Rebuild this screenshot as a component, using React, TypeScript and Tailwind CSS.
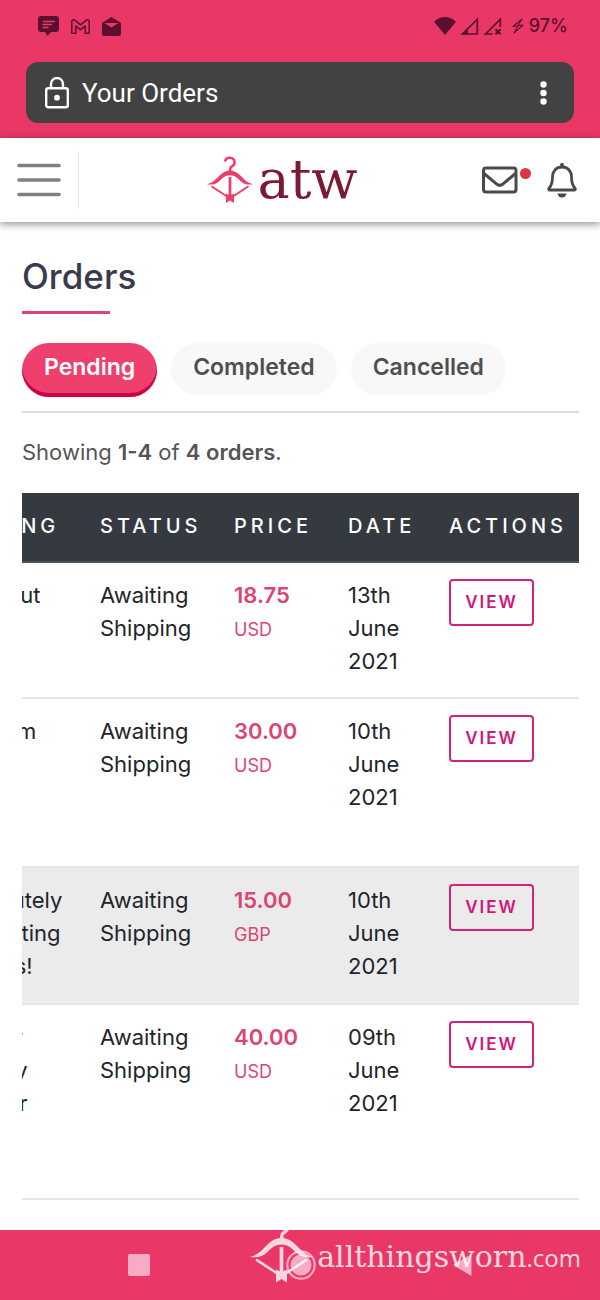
import { useLayoutEffect, useRef, useState } from 'react';

const TABS = ['Pending', 'Completed', 'Cancelled'];

const COLUMNS = [
  { label: 'Listing', width: 'w-[147px]' },
  { label: 'Status', width: 'w-[134px]' },
  { label: 'Price', width: 'w-[114px]' },
  { label: 'Date', width: 'w-[101px]' },
  { label: 'Actions', width: 'w-[148px]' },
];

const ORDERS = [
  { id: 1, listing: 'Workout', status: 'Awaiting Shipping', price: '18.75', currency: 'USD', date: '13th June 2021', row: 'h-[136px]' },
  { id: 2, listing: 'Uniform', status: 'Awaiting Shipping', price: '30.00', currency: 'USD', date: '10th June 2021', row: 'h-[169px]' },
  { id: 3, listing: 'Absolutely disgusting jackets!', status: 'Awaiting Shipping', price: '15.00', currency: 'GBP', date: '10th June 2021', row: 'h-[137px] bg-[#ebebeb]' },
  { id: 4, listing: 'Flower sweaty fresher', status: 'Awaiting Shipping', price: '40.00', currency: 'USD', date: '09th June 2021', row: 'h-[195px]' },
];

function BowLogo({ className }: { className: string }) {
  return (
    <svg viewBox="0 0 46 48" className={className} fill="none" stroke="currentColor" aria-hidden="true">
      <path d="M18 5.500C18.400 3 20.400 1.700 23 1.800c2.700.1 4.600 2 4.600 4.500 0 2.100-1.400 3.500-3 4.300-1 .6-1.400 1.200-1.400 2.400V17" strokeWidth="2.500" />
      <path
        d="M0 28.200C5 27.200 8 24.500 11.300 20.800 14.800 16.800 18.500 14.500 23 14.500S31.200 16.800 34.700 20.800C38 24.500 41 27.200 46 28.200 41.500 29.300 37.300 28.200 34 25.400 30.500 22.300 28 19.300 23 19.300S15.500 22.300 12 25.400C8.700 28.200 4.500 29.300 0 28.200z"
        fill="currentColor"
        stroke="none"
      />
      <path d="M4.500 30.300 20.500 40.800M41.500 30.300 25.500 40.800" strokeWidth="1.900" />
      <path d="M23 21V40" strokeWidth="2.700" />
      <path d="M19 37.500 23 39.500l4-2V47L23 44.400 19 47z" fill="currentColor" stroke="none" />
    </svg>
  );
}

function StatusBar() {
  return (
    <div className="flex h-[52px] items-center justify-between pr-8 pl-[38px] text-[#5c1030]">
      <div className="flex items-center gap-3">
        <svg width="21" height="20" viewBox="0 0 21 20" aria-hidden="true">
          <path d="M3 0h15a3 3 0 0 1 3 3v10a3 3 0 0 1-3 3h-5l-3.500 4L7 16H3a3 3 0 0 1-3-3V3a3 3 0 0 1 3-3z" fill="currentColor" />
          <path d="M5 5.500h12M4.500 8.500h9.500M4.500 11.500h6" stroke="#e93766" strokeWidth="1.500" />
        </svg>
        <svg width="19" height="15" viewBox="0 0 19 15" fill="none" stroke="currentColor" strokeWidth="1.500" strokeLinejoin="round" aria-hidden="true">
          <path d="M.8 2.500C.8.800 2.700.300 4 1.400L9.500 5.800 15 1.400c1.300-1.100 3.200-.600 3.200 1.100V14.200h-4V7L9.500 10.700 4.800 7v7.200h-4z" />
        </svg>
        <svg width="19" height="19" viewBox="0 0 19 19" aria-hidden="true">
          <path d="M9.500 0 18.300 5.500c.5.300.7.700.7 1.200V17a2 2 0 0 1-2 2H2a2 2 0 0 1-2-2V6.700c0-.5.200-.9.700-1.200z" fill="currentColor" />
          <path d="M2.500 6H16.500L9.500 10.500z" fill="#e93766" />
        </svg>
      </div>
      <div className="flex items-center">
        <svg width="22" height="18" viewBox="0 0 22 18" fill="currentColor" aria-hidden="true">
          <path d="M0 4.800C6-1.600 16-1.600 22 4.800L11 18z" />
        </svg>
        <svg width="19" height="18" viewBox="0 0 19 18" className="ml-1" aria-hidden="true">
          <path d="M17.300 2.200V17H2.600z" fill="none" stroke="currentColor" strokeWidth="1.700" />
          <path d="M1 17.800 8 10.500v7.300z" fill="currentColor" />
        </svg>
        <svg width="19" height="18" viewBox="0 0 19 18" className="ml-1" fill="none" stroke="currentColor" strokeWidth="1.700" aria-hidden="true">
          <path d="M17.300 10V2.200L2.600 17H9.500" />
          <path d="M12.500 12.200l5 5M17.500 12.200l-5 5" strokeWidth="2.200" />
        </svg>
        <svg width="12" height="16" viewBox="0 0 12 16" className="ml-[10px]" fill="none" stroke="currentColor" strokeWidth="1.100" strokeLinejoin="round" aria-hidden="true">
          <path d="M10 1 1 8.500l5-.7L2 15l9-8-5 .7z" />
        </svg>
        <span className="ml-[5px] text-lg font-medium">97%</span>
      </div>
    </div>
  );
}

function AddressBar() {
  return (
    <div className="mx-[26px] mt-[10px] mb-[15px] flex h-[61px] items-center rounded-xl bg-[#424242] pr-[25px] pl-[19px] text-white">
      <svg width="24" height="32" viewBox="0 0 24 32" fill="none" stroke="currentColor" strokeWidth="2.400" aria-hidden="true">
        <path d="M6 11V7a6 6 0 0 1 12 0v4" />
        <rect x="1.200" y="11.200" width="21.600" height="19" rx="2" />
        <circle cx="12" cy="20.700" r="2.900" fill="currentColor" stroke="none" />
      </svg>
      <span className="ml-[13px] flex-1 font-[Roboto,sans-serif] text-[26px] leading-8">Your Orders</span>
      <button type="button" aria-label="More options" className="flex w-3 justify-center">
        <svg width="7" height="24" viewBox="0 0 7 24" fill="currentColor">
          <circle cx="3.500" cy="3.500" r="3.200" />
          <circle cx="3.500" cy="12" r="3.200" />
          <circle cx="3.500" cy="20.500" r="3.200" />
        </svg>
      </button>
    </div>
  );
}

function SiteHeader() {
  return (
    <header className="relative flex h-[84px] items-center justify-between bg-white pr-[22px] pl-4 shadow-[0_2px_8px_rgba(0,0,0,0.45)]">
      <div className="mr-1 flex items-center">
        <button type="button" aria-label="Menu" className="text-[#808080]">
          <svg width="46" height="34" viewBox="0 0 46 34" stroke="currentColor" strokeWidth="3.600" strokeLinecap="round">
            <path d="M3 2.500h40M3 17h40M3 31.500h40" />
          </svg>
        </button>
        <span className="ml-4 h-[58px] w-px bg-[#e2e2e2]" />
      </div>
      <a href="#home" className="flex items-center gap-1 text-[#ee3d6b]">
        <BowLogo className="h-12 w-[46px]" />
        <span className="font-['DejaVu_Serif',serif] text-[54px] leading-[60px] text-[#7c1a33]">atw</span>
      </a>
      <div className="flex items-center text-[#4a4a4a]">
        <button type="button" aria-label="Messages" className="relative">
          <svg width="36" height="28" viewBox="0 0 36 28" fill="none" stroke="currentColor" strokeWidth="3">
            <rect x="1.500" y="2" width="32.500" height="24" rx="2.500" />
            <path d="M2 7.500 15 18.300c1.800 1.400 3.700 1.400 5.500 0L33.500 7.500" />
          </svg>
          <span className="absolute top-[2px] -right-[13px] size-[11px] rounded-full bg-[#dc3545]" />
        </button>
        <button type="button" aria-label="Notifications" className="ml-7">
          <svg width="32" height="36" viewBox="0 0 32 36" fill="none" stroke="currentColor" strokeWidth="2.800">
            <path d="M16 5C9.800 5 6.500 9.600 6.500 15c0 6.300-1.300 9-3.500 11.300-.7.800-.5 1.700.5 1.700h25c1 0 1.200-.900.500-1.700C26.800 24 25.500 21.300 25.500 15 25.500 9.600 22.200 5 16 5z" />
            <path d="M16 2.500v2" strokeWidth="3.600" strokeLinecap="round" />
            <path d="M11.500 31.500h9a4.500 4 0 0 1-9 0z" fill="currentColor" stroke="none" />
          </svg>
        </button>
      </div>
    </header>
  );
}

function OrdersTable() {
  const scroller = useRef<HTMLDivElement>(null);

  // Open on the price and action columns on narrow screens
  useLayoutEffect(() => {
    if (scroller.current) scroller.current.scrollLeft = scroller.current.scrollWidth;
  }, []);

  return (
    <div ref={scroller} className="mt-6 overflow-x-auto [scrollbar-width:none]">
      <table className="w-full min-w-[644px] table-fixed border-collapse text-left">
        <thead>
          <tr className="border-b-2 border-[#4b545c] bg-[#343a40] text-white">
            {COLUMNS.map((col) => (
              <th
                key={col.label}
                scope="col"
                className={`${col.width} pt-[17px] pr-0 pb-[18px] pl-[18px] text-xl leading-[33px] font-medium tracking-[4px] uppercase`}
              >
                {col.label}
              </th>
            ))}
          </tr>
        </thead>
        <tbody>
          {ORDERS.map((order) => (
            <tr key={order.id} className={`${order.row} border-b-2 border-[#e3e5e7] align-top text-[22px] leading-[33px] text-[#212529]`}>
              <td className="px-[18px] pt-4 pb-[18px]">{order.listing}</td>
              <td className="px-[18px] pt-4 pb-[18px]">{order.status}</td>
              <td className="px-[18px] pt-4 pb-[18px] text-[#dc4570]">
                <div className="font-semibold">{order.price}</div>
                <div className="text-lg leading-9">{order.currency}</div>
              </td>
              <td className="px-[18px] pt-4 pb-[18px]">{order.date}</td>
              <td className="px-[18px] pt-4 pb-[18px]">
                <button
                  type="button"
                  className="h-[47px] w-[85px] rounded border-2 border-[#d0237c] pb-[2px] text-[17px] leading-6 font-semibold tracking-[2px] text-[#d0187a]"
                >
                  VIEW
                </button>
              </td>
            </tr>
          ))}
        </tbody>
      </table>
    </div>
  );
}

function NavBar() {
  return (
    <footer className="relative flex h-[70px] items-center justify-around bg-[#e93766] px-[60px] text-[#f8abc4]">
      <button type="button" aria-label="Recent apps">
        <svg width="22" height="22" viewBox="0 0 22 22" fill="currentColor">
          <rect width="22" height="22" rx="2" />
        </svg>
      </button>
      <button type="button" aria-label="Home">
        <svg width="30" height="30" viewBox="0 0 30 30">
          <circle cx="15" cy="15" r="13.700" fill="none" stroke="currentColor" strokeWidth="2.200" />
          <circle cx="15" cy="15" r="10.500" fill="currentColor" />
        </svg>
      </button>
      <button type="button" aria-label="Back">
        <svg width="20" height="24" viewBox="0 0 20 24" fill="currentColor">
          <path d="M1 12 19.500 1v22z" />
        </svg>
      </button>
      <div className="absolute right-[19px] bottom-4 flex items-end text-white opacity-80">
        <BowLogo className="h-[66px] w-[63px]" />
        <div className="mb-2 ml-1 flex items-baseline">
          <span className="font-['DejaVu_Serif',serif] text-[30px] leading-9">allthingsworn</span>
          <span className="font-['Open_Sans',sans-serif] text-2xl leading-9">.com</span>
        </div>
      </div>
    </footer>
  );
}

export default function App() {
  const [active, setActive] = useState('Pending');

  return (
    <div className="flex min-h-screen flex-col bg-white font-[Inter,sans-serif]">
      <div className="bg-[#e93766]">
        <StatusBar />
        <AddressBar />
      </div>
      <SiteHeader />
      <main className="flex-1 pt-8 pr-[21px] pl-[22px]">
        <h1 className="text-[35px] leading-[45px] font-medium text-[#3a3a4f]">Orders</h1>
        <div className="mt-3 h-[3px] w-[88px] bg-[#e0446f]" />
        <div className="mt-[29px] flex items-start gap-[14px] border-b-2 border-[#dcdcdc] pb-[14px]">
          {TABS.map((tab) => (
            <button
              key={tab}
              type="button"
              onClick={() => setActive(tab)}
              className={`rounded-full px-[22px] pt-2 text-[23px] leading-[33px] font-semibold ${
                tab === active
                  ? 'bg-[#ef3f6c] pb-[13px] text-white shadow-[inset_0_-4px_0_#cb0547]'
                  : 'bg-[#f8f8f8] pb-[11px] text-[#4f4f4f]'
              }`}
            >
              {tab}
            </button>
          ))}
        </div>
        <p className="mt-[23px] text-[22px] leading-[33px] text-[#555]">
          Showing <b className="font-semibold">1-4</b> of <b className="font-semibold">4 orders</b>.
        </p>
        <OrdersTable />
      </main>
      <NavBar />
    </div>
  );
}
